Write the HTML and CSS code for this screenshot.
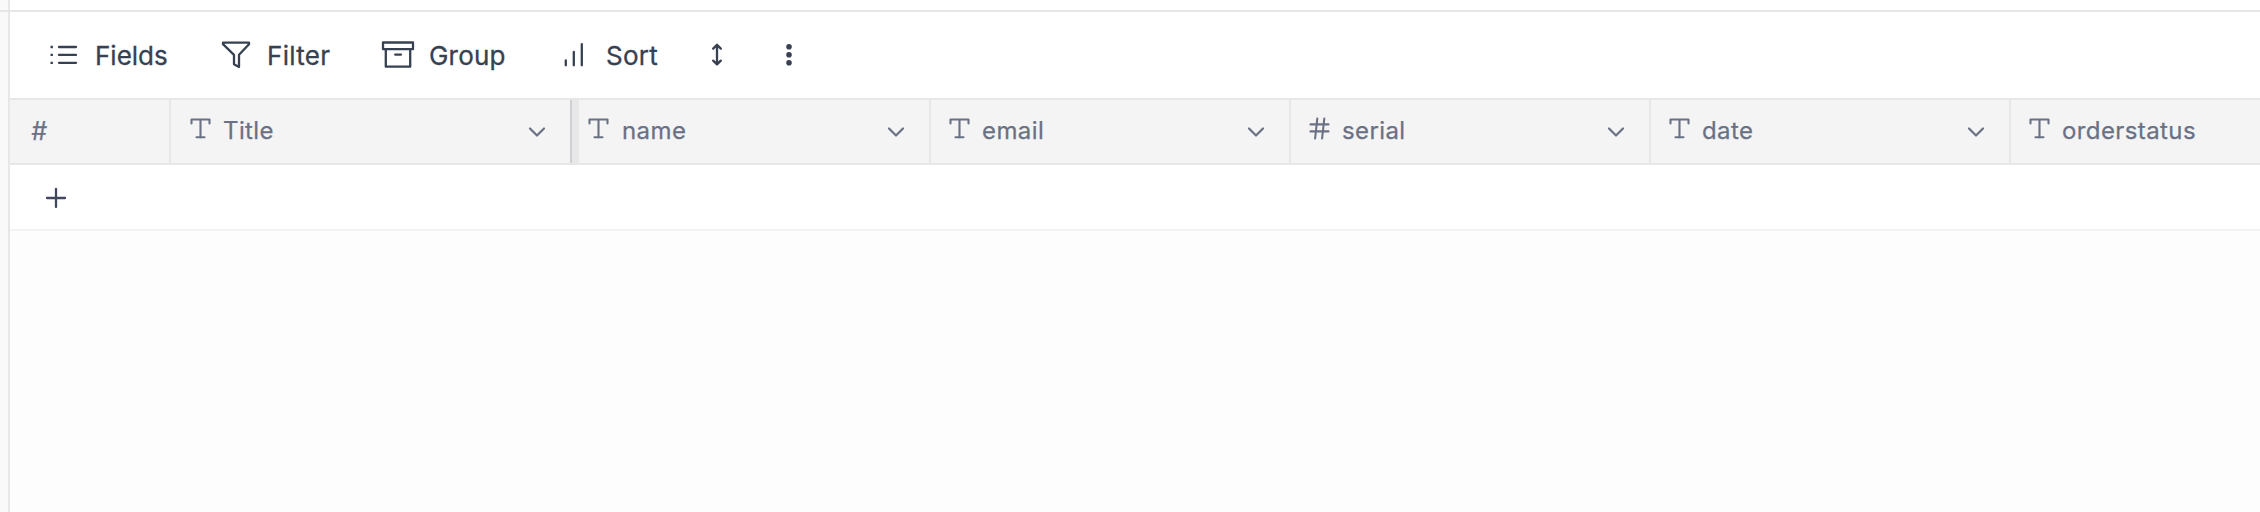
FILE: index.html
```
<!DOCTYPE html>
<html lang="en">
<head>
<meta charset="utf-8">
<title>Table</title>
<link rel="stylesheet" href="styles.css">
</head>
<body>
<svg width="0" height="0" class="defs">
  <symbol id="text" viewBox="0 0 22 24"><path d="M1.5 7.5V3.5h18v4M10.5 3.5v18M6.5 21.3h8"/></symbol>
  <symbol id="hash" viewBox="0 0 22 24"><path d="M1.5 8.4h18M1.5 15.4h18M8.3 2.5 6.1 22.5M15.3 2.5l-2.2 20"/></symbol>
  <symbol id="chevron" viewBox="0 0 18 12"><path d="M2 2.5l7 7 7-7"/></symbol>
</svg>
<div class="app">
  <aside class="rail"></aside>
  <main class="main">
    <div class="topbar"></div>
    <nav class="toolbar">
      <button class="tool fields"><svg class="icon" width="30" height="32"><path d="M11 8h17M11 15.9h17M11 23.8h17"/><path class="thick" d="M2.5 8h2.4M2.5 15.9h2.4M2.5 23.8h2.4"/></svg><span>Fields</span></button>
      <button class="tool filter"><svg class="icon" width="32" height="32"><path d="M2 3.7h26v1.5L18 15.8V28l-5-2.8v-9.4L2 5.2z"/></svg><span>Filter</span></button>
      <button class="tool group"><svg class="icon" width="36" height="32"><path d="M3 3.5h30v6.7H3zM5.8 10.2h24.4v17.5H5.8zM15.2 15.6h5.8"/></svg><span>Group</span></button>
      <button class="tool sort"><svg class="icon" width="24" height="32"><path d="M3.8 21.3v5M11.8 13v13.3M19.8 5.2v21.1"/></svg><span>Sort</span></button>
      <button class="tool height" aria-label="Row height"><svg class="icon" width="14" height="32"><path d="M7 6.3v18.5M3.2 9.6 7 5.8l3.8 3.8M3.2 21.6 7 25.4l3.8-3.8"/></svg></button>
      <button class="tool more" aria-label="More"><svg class="icon dots" width="14" height="32"><circle cx="7" cy="7.7" r="2.8"/><circle cx="7" cy="15.7" r="2.8"/><circle cx="7" cy="23.7" r="2.8"/></svg></button>
    </nav>
    <header class="head">
      <div class="cell index"><span>#</span></div>
      <div class="cell title"><svg class="type"><use href="#text"/></svg><span>Title</span><svg class="chev"><use href="#chevron"/></svg></div>
      <div class="resizer"></div>
      <div class="cell name"><svg class="type"><use href="#text"/></svg><span>name</span><svg class="chev"><use href="#chevron"/></svg></div>
      <div class="cell email"><svg class="type"><use href="#text"/></svg><span>email</span><svg class="chev"><use href="#chevron"/></svg></div>
      <div class="cell serial"><svg class="type"><use href="#hash"/></svg><span>serial</span><svg class="chev"><use href="#chevron"/></svg></div>
      <div class="cell date"><svg class="type"><use href="#text"/></svg><span>date</span><svg class="chev"><use href="#chevron"/></svg></div>
      <div class="cell status"><svg class="type"><use href="#text"/></svg><span>orderstatus</span></div>
    </header>
    <div class="add-row"><svg class="plus" width="22" height="22"><path d="M11 2v18M2 11h18"/></svg></div>
  </main>
</div>
</body>
</html>
```
FILE: styles.css
```
* { box-sizing: border-box; }
body { margin: 0; font-family: Inter, sans-serif; overflow: hidden; }
.defs { display: block; }
svg { flex: none; fill: none; stroke: currentColor; stroke-width: 2.1; stroke-linecap: round; stroke-linejoin: round; }
.app { display: flex; height: 512px; background: #fdfdfd; }
.rail { width: 8px; background: linear-gradient(#e7e7e7, #e7e7e7) 0 10px / 8px 2px no-repeat #f9f9f9; }
.main { flex: 1; min-width: 0; border-left: 2px solid #e7e7e7; }
.topbar { height: 12px; background: #fff; border-bottom: 2px solid #e7e7e7; }
.toolbar { height: 86px; padding: 0 0 0 38px; display: flex; align-items: flex-start; background: #fff; }
.tool { display: flex; align-items: center; height: 32px; margin: 27px 0 0; padding: 0; border: 0; background: none; color: #374151; font: 400 26px/32px Inter, sans-serif; white-space: nowrap; }
.tool span { padding-top: 2px; -webkit-text-stroke: .3px currentColor; }
.icon { stroke-width: 2.3; }
.thick { stroke-width: 2.3; stroke-linecap: butt; }
.dots { fill: currentColor; stroke: none; }
.fields { width: 173px; gap: 17px; letter-spacing: 0; }
.filter { width: 159px; gap: 14px; letter-spacing: .3px; }
.group { width: 182px; gap: 13px; letter-spacing: .2px; }
.sort { width: 148px; gap: 20px; letter-spacing: .3px; }
.height { width: 72px; }
.head { height: 67px; display: flex; background: #f4f4f4; border-top: 2px solid #e7e7e7; border-bottom: 2px solid #e7e7e7; color: #6a7184; font: 400 24px/30px Inter, sans-serif; }
.cell { width: 360px; padding: 15px 24px 0 18px; display: flex; align-items: flex-start; border-right: 2px solid #e7e7e7; }
.cell span { margin: 1px 0 0 11px; letter-spacing: .4px; -webkit-text-stroke: .25px currentColor; }
.index { width: 161px; padding-left: 21px; }
.cell.index span { margin-left: 0; font-style: italic; font-size: 25px; }
.title { width: 399px; padding-left: 19px; border-right: 0; }
.resizer { width: 9px; border-left: 2px solid #cfd0d3; background: #e8e8e8; }
.name { width: 352px; padding-left: 10px; }
.status { width: 249px; border: 0; }
.type { width: 22px; height: 24px; margin-top: 1px; }
.name .type { margin-left: -1px; margin-right: 1px; }
.chev { width: 18px; height: 12px; margin: 11px 0 0 auto; stroke-width: 2.2; }
.add-row { height: 66px; padding: 22px 0 0 35px; background: #fff; border-bottom: 2px solid #f3f3f3; color: #42485c; }
.plus { display: block; stroke-width: 2.3; }
```
